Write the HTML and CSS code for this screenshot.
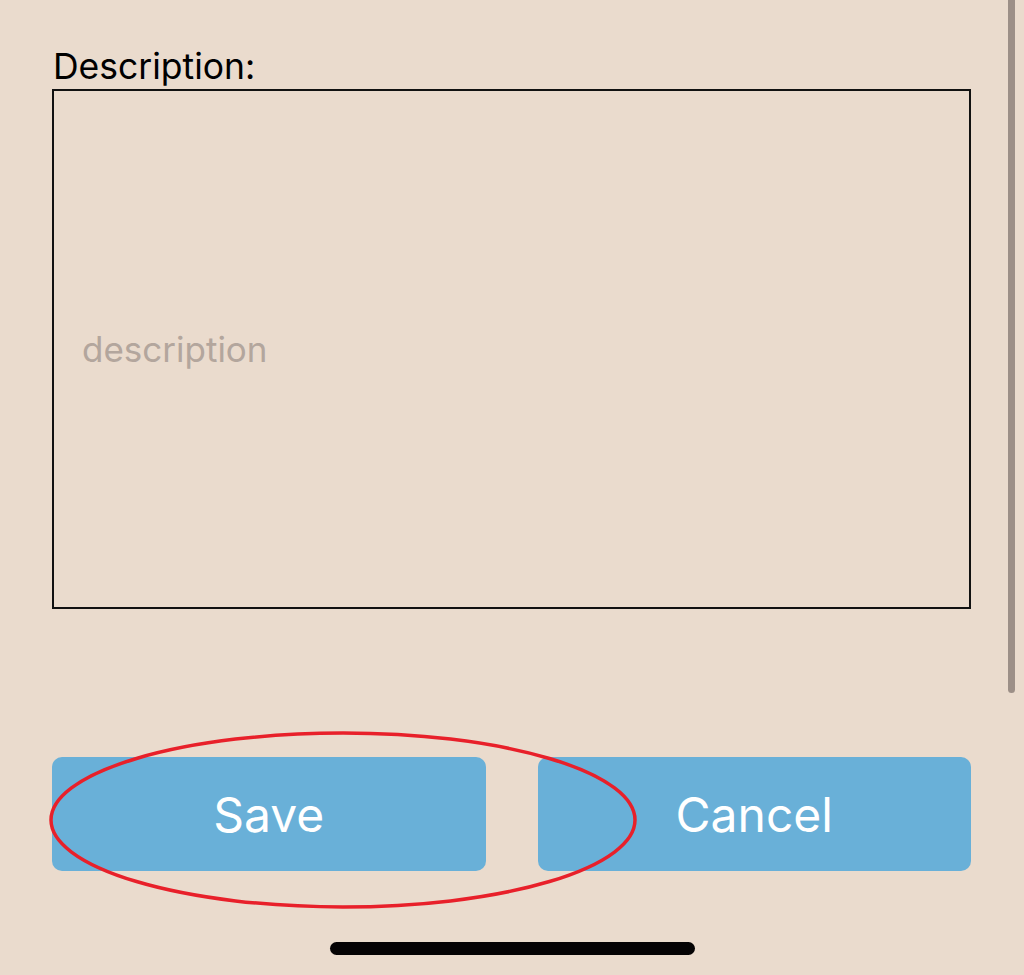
FILE: index.html
```html
<!DOCTYPE html>
<html>
<head>
<meta charset="utf-8">
<link rel="stylesheet" href="styles.css">
</head>
<body>
<div class="screen">
  <div class="form">
    <label class="label">Description:</label>
    <div class="textarea"><span class="placeholder">description</span></div>
    <div class="buttons">
      <button class="btn">Save</button>
      <button class="btn">Cancel</button>
    </div>
    <svg class="highlight" width="600" height="182" viewBox="0 0 600 182">
      <ellipse cx="294" cy="90" rx="292" ry="87" fill="none" stroke="#E8202A" stroke-width="3.5"/>
    </svg>
  </div>
  <div class="home-bar"></div>
  <div class="scrollbar"></div>
</div>
</body>
</html>
```
FILE: styles.css
```css
html, body {
  margin: 0;
  padding: 0;
  background: #EADBCD;
}
.screen {
  position: relative;
  width: 1024px;
  height: 975px;
  overflow: hidden;
  font-family: Inter, "Noto Sans", sans-serif;
}
.form {
  position: relative;
  padding: 44px 53px 0 52px;
  display: flex;
  flex-direction: column;
}
.label {
  font-size: 35.5px;
  line-height: 45px;
  color: #000;
  padding-left: 1px;
}
.textarea {
  box-sizing: border-box;
  height: 520px;
  border: 2px solid #111;
  display: flex;
  align-items: center;
  padding-left: 28px;
}
.placeholder {
  font-size: 35px;
  color: #B3A69D;
  margin-top: 0;
}
.buttons {
  margin-top: 148px;
  display: flex;
  gap: 52px;
}
.btn {
  flex: 1;
  height: 114px;
  border: none;
  border-radius: 10px;
  background: #69B0D8;
  color: #fff;
  font-family: Inter, "Noto Sans", sans-serif;
  font-size: 48px;
  padding: 0;
  margin: 0;
}
.highlight {
  position: absolute;
  left: 49px;
  top: 730px;
}
.home-bar {
  width: 365px;
  height: 13px;
  border-radius: 7px;
  background: #050304;
  margin: 71px auto 0 330px;
}
.scrollbar {
  position: absolute;
  right: 9px;
  top: -10px;
  width: 7px;
  height: 703px;
  border-radius: 4px;
  background: #9C8F87;
}
```
